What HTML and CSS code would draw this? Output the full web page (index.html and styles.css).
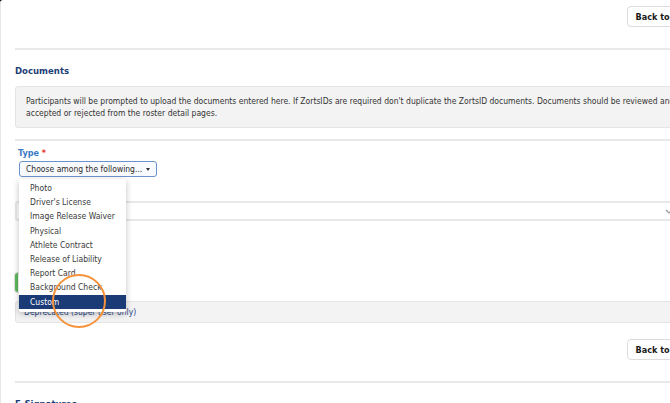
FILE: index.html
```html
<!DOCTYPE html>
<html>
<head>
  <meta charset="utf-8">
  <title>Documents</title>
  <meta name="viewport" content="width=device-width, initial-scale=1">
  <link rel="stylesheet" href="styles.css">
</head>
<body>

<div class="window">
  <div class="page">
    <div class="actions">
      <button class="btn-back">Back to Teams</button>
    </div>
    <hr class="divider">

    <h2 class="section-title">Documents</h2>
    <div class="note">
      Participants will be prompted to upload the documents entered here. If ZortsIDs are required don't duplicate the ZortsID documents. Documents should be reviewed and<br>
      accepted or rejected from the roster detail pages.
    </div>
    <hr class="divider thin">

    <div class="field">
      <label class="field-label">Type <span class="req">*</span></label>
      <div class="select-wrap">
        <div class="select">Choose among the following... <span class="caret"></span></div>
        <ul class="menu">
          <li>Photo</li>
          <li>Driver's License</li>
          <li>Image Release Waiver</li>
          <li>Physical</li>
          <li>Athlete Contract</li>
          <li>Release of Liability</li>
          <li>Report Card</li>
          <li>Background Check</li>
          <li class="active">Custom</li>
        </ul>
      </div>
    </div>

    <div class="input-row">
      <svg class="chevron" width="8" height="5" viewBox="0 0 8 5"><path d="M1 1l3 3 3-3" fill="none" stroke="#999" stroke-width="1.2"/></svg>
    </div>

    <div class="toggle"></div>

    <div class="deprecated">Deprecated (super user only)</div>

    <div class="actions bottom">
      <button class="btn-back">Back to Teams</button>
    </div>
    <hr class="divider">

    <h2 class="section-title">E-Signatures</h2>
  </div>

  <!-- highlight ring over the selected option -->
  <span class="marker"></span>
</div>

</body>
</html>
```

FILE: styles.css
```css
html, body {
  margin: 0;
  padding: 0;
  height: 100%;
  overflow: hidden;
  background-color: #000;
}
.window {
  position: relative;
  height: 403px;
  width: 760px;
  background: #fff;
  border-left: 1px solid #e6e6e6;
  border-top-left-radius: 3px;
  font-family: 'DejaVu Sans', Verdana, sans-serif;
  font-stretch: condensed;
  font-size: 8.5px;
  color: #333;
}
.page {
  width: 668px;
  padding: 6px 0 0 14px;
}
.actions {
  display: flex;
  justify-content: flex-end;
  margin-right: -27px;
}
.actions.bottom {
  margin-top: 16px;
}
.btn-back {
  height: 21px;
  padding: 0 8px;
  font-family: inherit;
  font-stretch: condensed;
  font-size: 9px;
  font-weight: bold;
  color: #1a1a1a;
  background: #fff;
  border: 1px solid #dcdcdc;
  border-radius: 4px;
}
.divider {
  border: 0;
  height: 2px;
  background: #e9e9e9;
  margin: 21px 0 0;
}
.divider.thin {
  margin-top: 11px;
}
.section-title {
  margin: 15px 0 9px;
  font-size: 9.5px;
  line-height: 12px;
  font-weight: bold;
  color: #1e3e78;
}
.note {
  padding: 8px 10px;
  line-height: 12px;
  background: #f3f3f3;
  border: 1px solid #e4e4e4;
  border-radius: 3px;
  white-space: nowrap;
}
.field {
  margin-top: 6px;
}
.field-label {
  display: block;
  margin-left: 3px;
  line-height: 12px;
  font-size: 9px;
  font-weight: bold;
  color: #3b7bc6;
}
.req {
  color: #e53935;
}
.select-wrap {
  position: relative;
  display: inline-block;
  margin: 2px 0 0 4px;
}
.select {
  display: flex;
  align-items: center;
  height: 14px;
  padding: 0 6px;
  white-space: nowrap;
  background: #f8fafd;
  border: 1px solid #6b92cb;
  border-radius: 3px;
  color: #2a2a2a;
}
.caret {
  margin-left: 4px;
  border-left: 2px solid transparent;
  border-right: 2px solid transparent;
  border-top: 3px solid #333;
}
.menu {
  position: absolute;
  top: calc(100% + 2px);
  left: 0;
  z-index: 2;
  width: 107px;
  margin: 0;
  padding: 2px 0 3px;
  list-style: none;
  background: #fff;
  box-shadow: 0 2px 6px rgba(0,0,0,0.25);
  border-radius: 2px;
}
.menu li {
  height: 14.2px;
  line-height: 14.2px;
  padding-left: 11px;
  color: #3a3a3a;
  white-space: nowrap;
}
.menu li.active {
  background: #1b3b77;
  color: #fff;
}
.input-row {
  display: flex;
  justify-content: flex-end;
  align-items: center;
  height: 16px;
  margin-top: 24px;
  padding-right: 8px;
  border: 2px solid #e8e8e8;
  border-radius: 3px;
}
.toggle {
  width: 90px;
  height: 19px;
  margin-top: 52px;
  border-left: 3px solid #5cb85c;
  border-radius: 3px;
  background: #fff;
  box-shadow: 0 0 0 1px #ddd;
}
.deprecated {
  height: 20px;
  margin-top: 9px;
  padding-left: 8px;
  line-height: 20px;
  color: #28498a;
  background: #f3f3f3;
  border: 1px solid #e4e4e4;
  border-radius: 3px;
}
.marker {
  position: absolute;
  left: 51px;
  top: 274px;
  width: 54px;
  height: 54px;
  border: 2px solid #f5923a;
  border-radius: 50%;
  box-sizing: border-box;
  z-index: 3;
}
```
